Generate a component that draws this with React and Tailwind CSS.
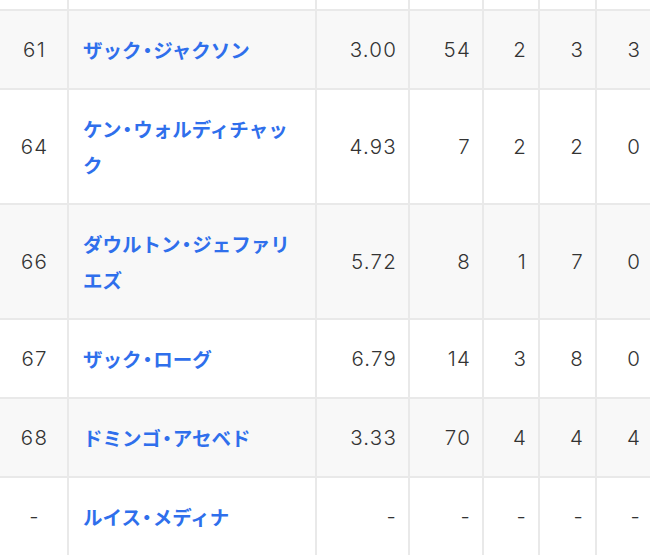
import React from "react";

const rows = [
  { no: "61", name: ["ザック・ジャクソン"], era: "3.00", g: "54", w: "2", l: "3", s: "3", striped: true },
  { no: "64", name: ["ケン・ウォルディチャッ", "ク"], era: "4.93", g: "7", w: "2", l: "2", s: "0" },
  { no: "66", name: ["ダウルトン・ジェファリ", "エズ"], era: "5.72", g: "8", w: "1", l: "7", s: "0", striped: true },
  { no: "67", name: ["ザック・ローグ"], era: "6.79", g: "14", w: "3", l: "8", s: "0" },
  { no: "68", name: ["ドミンゴ・アセベド"], era: "3.33", g: "70", w: "4", l: "4", s: "4", striped: true },
  { no: "-", name: ["ルイス・メディナ"], era: "-", g: "-", w: "-", l: "-", s: "-" },
];

const cell = "border-2 border-[#e9e9e9] py-[20.5px] align-middle";
const digits = "font-['Inter','Noto_Sans_CJK_JP',sans-serif] font-light text-[20.5px] tracking-[1.2px]";
const num = cell + " text-right pr-[11px] " + digits;

// 中黒だけプロポーショナル幅にする
function Line({ text }) {
  if (!text.includes("・")) return text;
  const [first, last] = text.split("・");
  return (
    <>
      {first}
      <span className="[font-feature-settings:'palt'] px-[1px]">・</span>
      {last}
    </>
  );
}

export default function App() {
  return (
    <div
      className="w-[650px] h-[555px] overflow-hidden bg-white text-[#333] text-[21px] leading-[36px]"
      style={{ fontFamily: '"Noto Sans CJK JP", "Noto Sans", sans-serif' }}
    >
      <table className="table-fixed border-collapse w-[654px] -ml-[2px]">
        <colgroup>
          <col className="w-[69px]" />
          <col className="w-[248px]" />
          <col className="w-[93px]" />
          <col className="w-[74px]" />
          <col className="w-[56px]" />
          <col className="w-[57px]" />
          <col className="w-[57px]" />
        </colgroup>
        <tbody>
          <tr className="h-[10px]">
            <td className="border-2 border-t-0 border-[#e9e9e9]" />
            <td className="border-2 border-t-0 border-[#e9e9e9]" />
            <td className="border-2 border-t-0 border-[#e9e9e9]" />
            <td className="border-2 border-t-0 border-[#e9e9e9]" />
            <td className="border-2 border-t-0 border-[#e9e9e9]" />
            <td className="border-2 border-t-0 border-[#e9e9e9]" />
            <td className="border-2 border-t-0 border-[#e9e9e9]" />
          </tr>
          {rows.map((r) => (
            <tr key={r.no + r.name[0]} className={r.striped ? "bg-[#f8f8f8]" : "bg-white"}>
              <td className={cell + " text-center pl-[2px] " + digits}>{r.no}</td>
              <td className={cell + " px-[14px] text-[19.5px] font-bold text-[#2f6fec]"}>
                {r.name.map((line, i) => (
                  <div key={i}>
                    <Line text={line} />
                  </div>
                ))}
              </td>
              <td className={num}>{r.era}</td>
              <td className={num}>{r.g}</td>
              <td className={num}>{r.w}</td>
              <td className={num}>{r.l}</td>
              <td className={num}>{r.s}</td>
            </tr>
          ))}
        </tbody>
      </table>
    </div>
  );
}
